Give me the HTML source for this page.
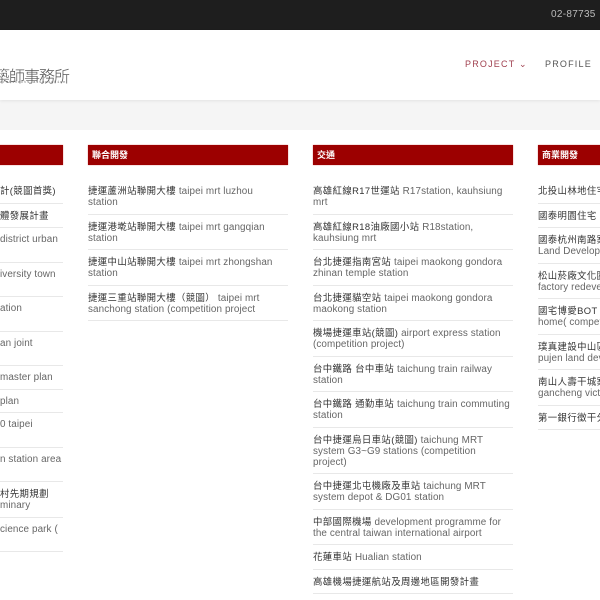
<!DOCTYPE html>
<html><head><meta charset="utf-8"><style>
*{margin:0;padding:0;box-sizing:border-box}
body{width:600px;height:600px;overflow:hidden;background:#fff;font-family:"Liberation Sans","Noto Sans CJK TC",sans-serif;position:relative}
.top{position:absolute;left:0;top:0;width:600px;height:30px;background:#1e1e1e}
.phone{position:absolute;left:551px;top:9px;color:#bbb;font-size:10px;letter-spacing:.3px}
.hdr{position:absolute;left:0;top:30px;width:600px;height:70px;background:#fff;box-shadow:0 1px 3px rgba(0,0,0,.08);z-index:2}
.logo{position:absolute;left:-6px;top:33px;font-size:16px;color:#555;font-weight:300;letter-spacing:-1px}
.sub{position:absolute;left:0;top:51px;font-size:4px;color:#777;letter-spacing:.6px;font-family:"Liberation Mono",monospace}
.nav{position:absolute;top:29px;font-size:9px;letter-spacing:1.2px}
.band{position:absolute;left:0;top:100px;width:600px;height:30px;background:#f5f5f5}
.wrap{position:absolute;left:0;top:0;width:600px;height:600px;overflow:hidden}
.col{position:absolute;top:145px;width:200px}
.h{height:20px;background:#9c0000;color:#fff;font-size:9px;font-weight:bold;line-height:20px;padding-left:4px;box-shadow:0 0 1px #d66}
.list{margin-top:14px}
.it{padding:6px 0 5.5px 0;font-size:9.9px;line-height:11px;color:#666;border-bottom:1px solid #e8e8e8;letter-spacing:.1px}
.it b{font-weight:normal;color:#333;font-size:9.4px;letter-spacing:.4px}
</style></head><body>
<div class="top"><div class="phone">02-87735</div></div>
<div class="hdr">
<div class="logo">築師事務所</div>
<div class="sub">architects association</div>
<div class="nav" style="left:465px;color:#a0404f">PROJECT ⌄</div>
<div class="nav" style="left:545px;color:#555">PROFILE</div>
</div>
<div class="band"></div>
<div class="wrap">
<div class="col" style="left:-137px">
<div class="h"></div>
<div class="list" style="padding-left:137px">
<div class="it"><b>計(競圖首獎)</b></div>
<div class="it"><b>體發展計畫</b></div>
<div class="it">district urban<br>&nbsp;</div>
<div class="it">iversity town<br>&nbsp;</div>
<div class="it">ation<br>&nbsp;</div>
<div class="it">an joint<br>&nbsp;</div>
<div class="it">master plan</div>
<div class="it">plan</div>
<div class="it">0 taipei<br>&nbsp;</div>
<div class="it">n station area<br>&nbsp;</div>
<div class="it"><b>村先期規劃</b><br>minary</div>
<div class="it">cience park (<br>&nbsp;</div>
</div></div>

<div class="col" style="left:88px">
<div class="h">聯合開發</div>
<div class="list">
<div class="it"><b>捷運蘆洲站聯開大樓</b> taipei mrt luzhou<br>station</div>
<div class="it"><b>捷運港墘站聯開大樓</b> taipei mrt gangqian station</div>
<div class="it"><b>捷運中山站聯開大樓</b> taipei mrt zhongshan station</div>
<div class="it"><b>捷運三重站聯開大樓（競圖）</b> taipei mrt sanchong station (competition project</div>
</div></div>

<div class="col" style="left:313px">
<div class="h">交通</div>
<div class="list">
<div class="it"><b>高雄紅線R17世運站</b> R17station, kauhsiung mrt</div>
<div class="it"><b>高雄紅線R18油廠國小站</b> R18station, kauhsiung mrt</div>
<div class="it"><b>台北捷運指南宮站</b> taipei maokong gondora zhinan temple station</div>
<div class="it"><b>台北捷運貓空站</b> taipei maokong gondora maokong station</div>
<div class="it"><b>機場捷運車站(競圖)</b> airport express station (competition project)</div>
<div class="it"><b>台中鐵路 台中車站</b> taichung train railway station</div>
<div class="it"><b>台中鐵路 通勤車站</b> taichung train commuting station</div>
<div class="it"><b>台中捷運烏日車站(競圖)</b> taichung MRT system G3~G9 stations (competition<br>project)</div>
<div class="it"><b>台中捷運北屯機廠及車站</b> taichung MRT system depot &amp; DG01 station</div>
<div class="it"><b>中部國際機場</b> development programme for the central taiwan international airport</div>
<div class="it"><b>花蓮車站</b> Hualian station</div>
<div class="it"><b>高雄機場捷運航站及周邊地區開發計畫</b></div>
</div></div>

<div class="col" style="left:538px">
<div class="h">商業開發</div>
<div class="list">
<div class="it"><b>北投山林地住宅</b></div>
<div class="it"><b>國泰明園住宅</b></div>
<div class="it"><b>國泰杭州南路案</b><br>Land Development</div>
<div class="it"><b>松山菸廠文化園區</b><br>factory redevelopment</div>
<div class="it"><b>國宅博愛BOT</b><br>home( competition</div>
<div class="it"><b>璞真建設中山區</b><br>pujen land development</div>
<div class="it"><b>南山人壽干城案</b><br>gancheng victory</div>
<div class="it"><b>第一銀行徵干分行</b></div>
</div></div>
</div>
</body></html>
